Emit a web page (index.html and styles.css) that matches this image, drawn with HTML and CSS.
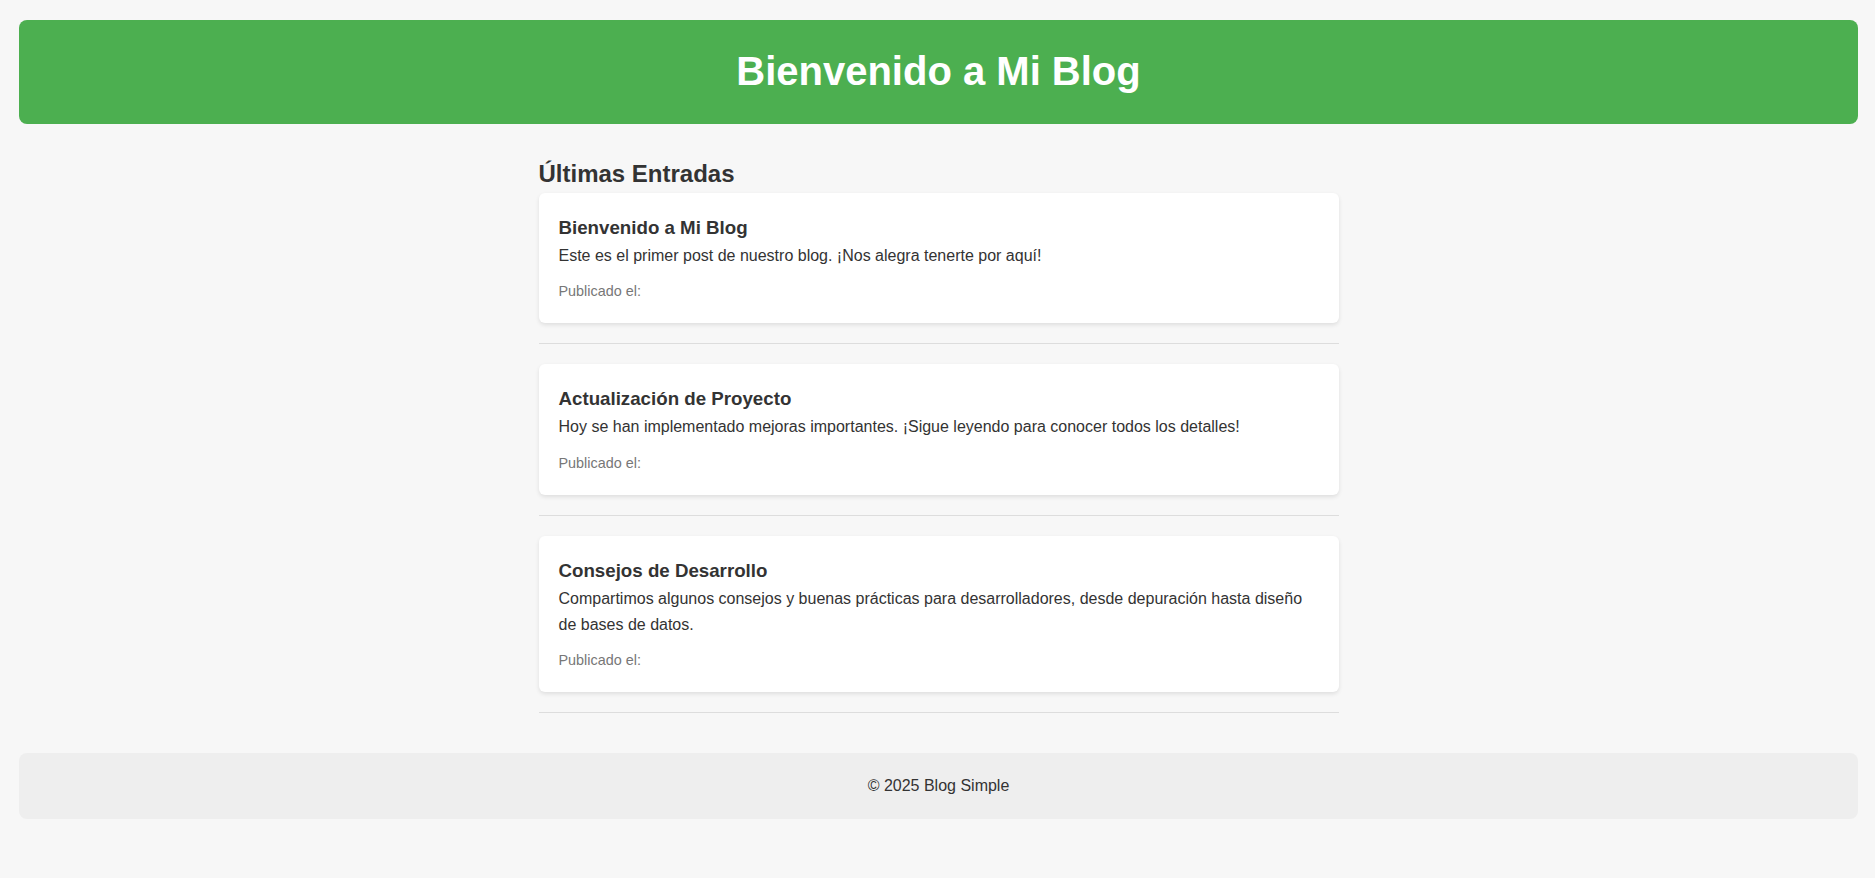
FILE: index.html
```html
<!DOCTYPE html>
<html lang="es">
<head>
<meta charset="utf-8">
<title>Mi Blog</title>
<link rel="stylesheet" href="styles.css">
</head>
<body>
<header class="site-header">
  <h1 class="site-title">Bienvenido a Mi Blog</h1>
</header>
<main class="content">
  <h2 class="section-title">Últimas Entradas</h2>
  <article class="post">
    <h3 class="post-title">Bienvenido a Mi Blog</h3>
    <p class="post-body">Este es el primer post de nuestro blog. ¡Nos alegra tenerte por aquí!</p>
    <p class="post-meta">Publicado el: </p>
  </article>
  <hr class="divider">
  <article class="post">
    <h3 class="post-title">Actualización de Proyecto</h3>
    <p class="post-body">Hoy se han implementado mejoras importantes. ¡Sigue leyendo para conocer todos los detalles!</p>
    <p class="post-meta">Publicado el: </p>
  </article>
  <hr class="divider">
  <article class="post">
    <h3 class="post-title">Consejos de Desarrollo</h3>
    <p class="post-body">Compartimos algunos consejos y buenas prácticas para desarrolladores, desde depuración hasta diseño de bases de datos.</p>
    <p class="post-meta">Publicado el: </p>
  </article>
  <hr class="divider">
</main>
<footer class="site-footer">
  <p class="footer-text">© 2025 Blog Simple</p>
</footer>
</body>
</html>
```
FILE: styles.css
```css
html, body {
  margin: 0;
}
body {
  padding: 20px 17px 20px 19px;
  background: #f7f7f7;
  color: #333;
  font-family: "Liberation Sans", Arial, sans-serif;
  font-size: 16px;
  line-height: 1.6;
}
.site-header {
  background: #4caf50;
  color: #fff;
  border-radius: 8px;
  padding: 20px;
  text-align: center;
}
.site-title {
  margin: 0;
  font-size: 40px;
  line-height: 63.5px;
  font-weight: bold;
}
.content {
  max-width: 800px;
  margin: 0 auto;
  padding-top: 31px;
}
.section-title {
  margin: 0;
  font-size: 24px;
  font-weight: bold;
}
.post {
  background: #fff;
  border-radius: 6px;
  padding: 20px;
  box-shadow: 0 2px 4px rgba(0, 0, 0, 0.1);
}
.post-title {
  margin: 0;
  font-size: 18.72px;
  font-weight: bold;
}
.post-body {
  margin: 0 0 12px;
}
.post-meta {
  margin: 0;
  font-size: 14.4px;
  color: #777;
}
.divider {
  border: 0;
  border-top: 1px solid #ddd;
  margin: 20px 0;
}
.site-footer {
  margin-top: 40px;
  background: #eee;
  border-radius: 8px;
  padding: 20px;
  text-align: center;
}
.footer-text {
  margin: 0;
}
```
